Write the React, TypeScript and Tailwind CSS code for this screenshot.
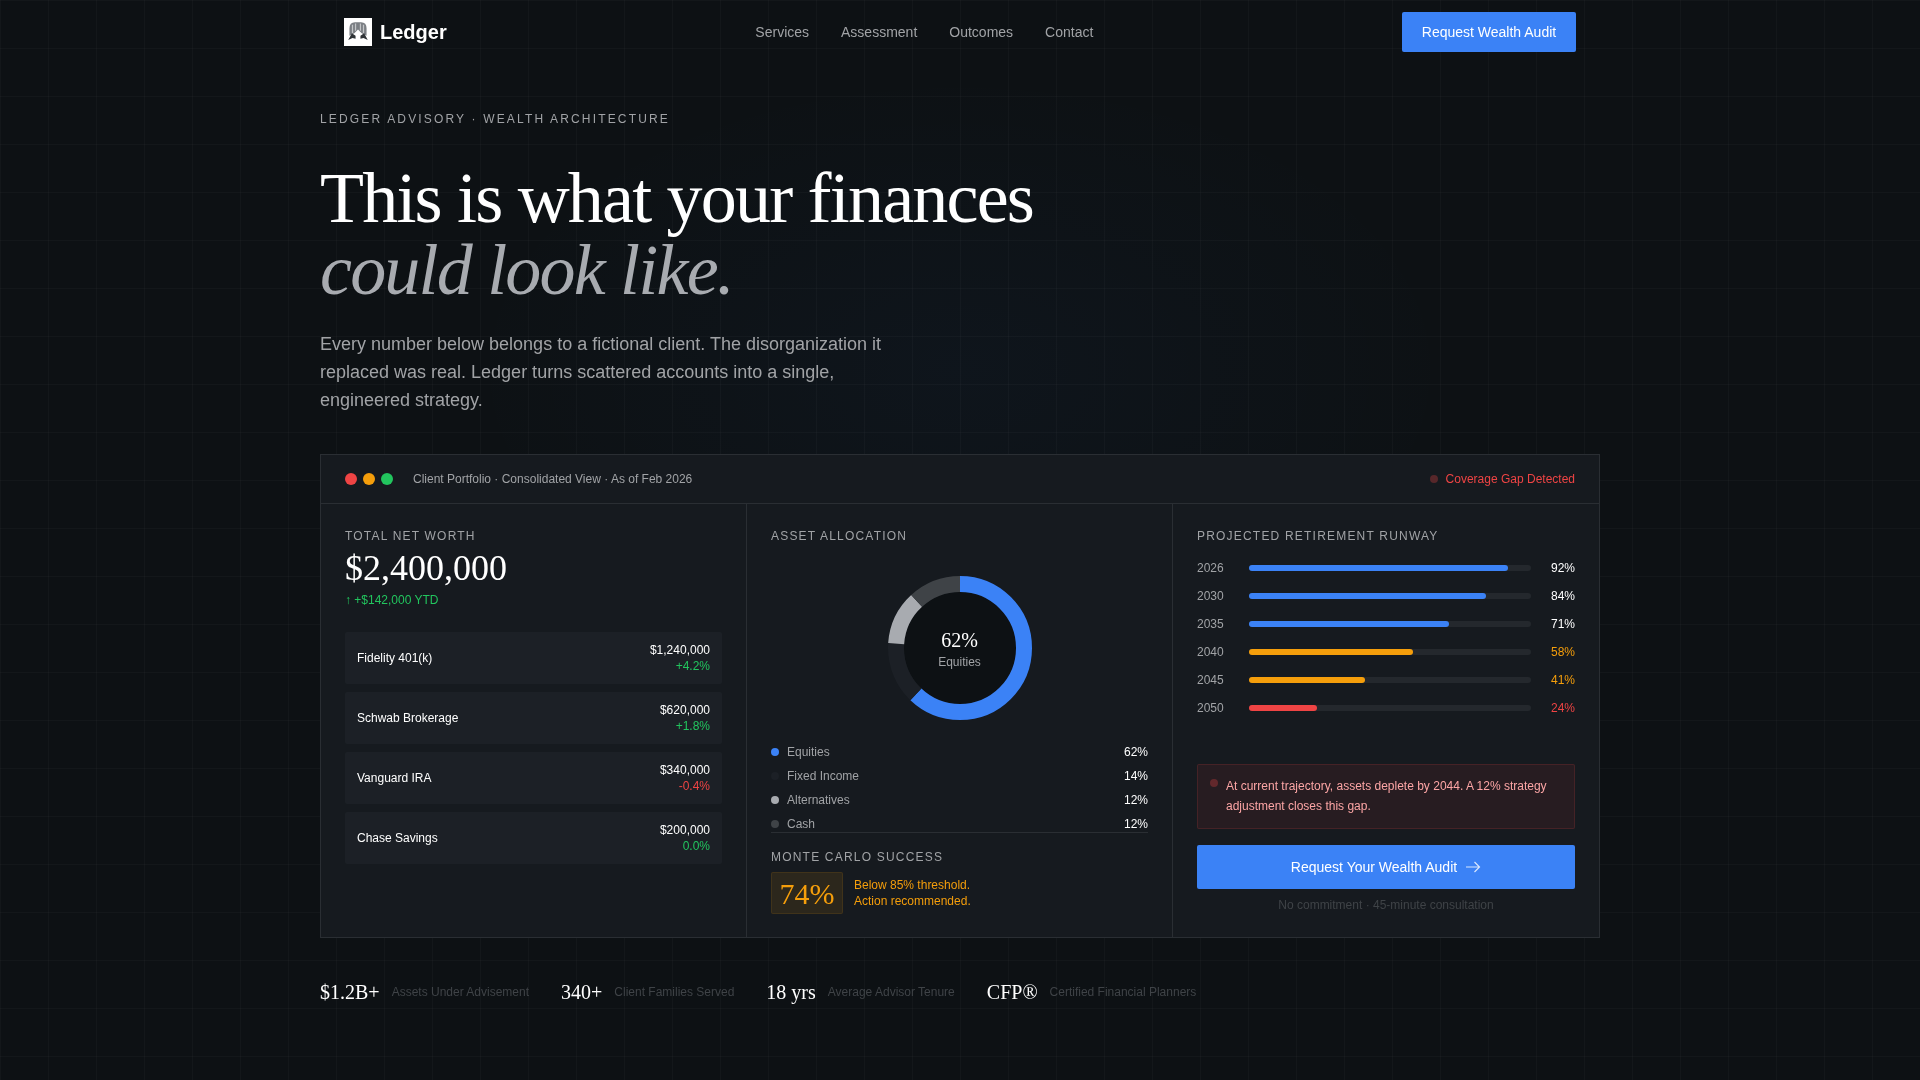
const accounts = [
  { name: 'Fidelity 401(k)', value: '$1,240,000', change: '+4.2%', tone: 'text-[#22c55e]' },
  { name: 'Schwab Brokerage', value: '$620,000', change: '+1.8%', tone: 'text-[#22c55e]' },
  { name: 'Vanguard IRA', value: '$340,000', change: '-0.4%', tone: 'text-[#ef4444]' },
  { name: 'Chase Savings', value: '$200,000', change: '0.0%', tone: 'text-[#22c55e]' },
]

const allocation = [
  { name: 'Equities', pct: 62, dot: 'bg-[#3b82f6]', stroke: '#3b82f6' },
  { name: 'Fixed Income', pct: 14, dot: 'bg-[#1c2026]', stroke: '#1c2026' },
  { name: 'Alternatives', pct: 12, dot: 'bg-[#a8abb0]', stroke: '#a8abb0' },
  { name: 'Cash', pct: 12, dot: 'bg-[#3f4347]', stroke: '#3f4347' },
]

const runway = [
  { year: '2026', pct: 92, bar: 'bg-[#3b82f6]', text: 'text-white' },
  { year: '2030', pct: 84, bar: 'bg-[#3b82f6]', text: 'text-white' },
  { year: '2035', pct: 71, bar: 'bg-[#3b82f6]', text: 'text-white' },
  { year: '2040', pct: 58, bar: 'bg-[#f59e0b]', text: 'text-[#f59e0b]' },
  { year: '2045', pct: 41, bar: 'bg-[#f59e0b]', text: 'text-[#f59e0b]' },
  { year: '2050', pct: 24, bar: 'bg-[#ef4444]', text: 'text-[#ef4444]' },
]

const stats = [
  { value: '$1.2B+', label: 'Assets Under Advisement' },
  { value: '340+', label: 'Client Families Served' },
  { value: '18 yrs', label: 'Average Advisor Tenure' },
  { value: 'CFP®', label: 'Certified Financial Planners' },
]

const serif = "font-['Liberation_Serif',serif]"

function Logo() {
  return (
    <div className="flex size-7 items-center justify-center bg-white">
      <svg width="22" height="22" viewBox="2 3 18 18">
        <path d="M4 15 L4 9 Q4 4 8.5 4 L13.5 4 Q18 4 18 9 L18 15 L14 13 L11 10 L8 13 Z" fill="#7b7f84" />
        <path d="M6.5 6 L6.5 13 M9 5 L9 11 M13 5 L13 11 M15.5 6 L15.5 13" stroke="#c4c6c9" strokeWidth="1" />
        <path d="M3 18.5 L6 13 L9 15 L9 17.5 L6.5 17 Z M19 18.5 L16 13 L13 15 L13 17.5 L15.5 17 Z" fill="#2f3337" />
      </svg>
    </div>
  )
}

function Donut() {
  const r = 64
  const c = 2 * Math.PI * r
  let offset = 0

  return (
    <div className="relative size-[144px]">
      <svg width="144" height="144" viewBox="0 0 144 144" className="-rotate-90">
        <circle cx="72" cy="72" r="56" fill="#0d1114" />
        {allocation.map((item) => {
          const len = (item.pct / 100) * c
          const el = (
            <circle
              key={item.name}
              cx="72"
              cy="72"
              r={r}
              fill="none"
              stroke={item.stroke}
              strokeWidth="16"
              strokeDasharray={`${len} ${c - len}`}
              strokeDashoffset={-offset}
            />
          )
          offset += len
          return el
        })}
      </svg>
      <div className="absolute inset-0 flex flex-col items-center justify-center">
        <span className={`${serif} text-[20px] leading-[28px] text-white`}>62%</span>
        <span className="text-[12px] leading-[16px] text-[#a1a3a6]">Equities</span>
      </div>
    </div>
  )
}

function SectionLabel({ children }: { children: string }) {
  return <div className="text-[12px] leading-[16px] tracking-[0.1em] text-[#a1a3a6]">{children}</div>
}

export default function App() {
  return (
    <div className="min-h-screen overflow-hidden bg-[#0d1114] bg-[radial-gradient(ellipse_500px_300px_at_960px_370px,rgba(59,130,246,0.035),transparent),linear-gradient(rgba(255,255,255,0.025)_1px,transparent_1px),linear-gradient(90deg,rgba(255,255,255,0.025)_1px,transparent_1px)] bg-[size:100%_100%,48px_48px,48px_48px] font-['Liberation_Sans',sans-serif] text-white">
      <div className="mx-auto w-[1280px] will-change-transform">
        <nav className="flex h-[64px] items-center justify-between px-6">
          <div className="flex items-center gap-2">
            <Logo />
            <span className="text-[20px] font-bold leading-[28px]">Ledger</span>
          </div>
          <div className="flex items-center gap-8 text-[14px] text-[#a1a3a6]">
            <span>Services</span>
            <span>Assessment</span>
            <span>Outcomes</span>
            <span>Contact</span>
          </div>
          <button
            type="button"
            className="h-10 w-[174px] rounded-[2px] bg-[#3b82f6] text-[14px] font-medium text-white"
          >
            Request Wealth Audit
          </button>
        </nav>

        <section className="pt-[47px]">
          <div className="text-[12px] leading-[16px] tracking-[0.18em] text-[#a1a3a6]">
            LEDGER ADVISORY · WEALTH ARCHITECTURE
          </div>
          <h1 className={`${serif} mt-[35px] text-[72px] font-normal leading-[72px] tracking-[-0.025em] text-white`}>
            This is what your finances
            <br />
            <em className="text-[#a8abb0]">could look like.</em>
          </h1>
          <p className="mt-6 w-[576px] text-[18px] leading-[28.16px] text-[#a1a3a6]">
            Every number below belongs to a fictional client. The disorganization it replaced was real. Ledger turns
            scattered accounts into a single, engineered strategy.
          </p>
        </section>

        <section className="mt-[40px] border border-[#2a2e33] bg-[#161a1f]">
          <header className="flex h-[49px] items-center justify-between border-b border-[#2a2e33] px-6">
            <div className="flex items-center">
              <div className="flex gap-1.5">
                <span className="size-3 rounded-full bg-[#ef4444]" />
                <span className="size-3 rounded-full bg-[#f59e0b]" />
                <span className="size-3 rounded-full bg-[#22c55e]" />
              </div>
              <span className="ml-5 text-[12px] text-[#a1a3a6]">
                Client Portfolio · Consolidated View · As of Feb 2026
              </span>
            </div>
            <div className="flex items-center gap-2 text-[12px] text-[#ef4444]">
              <span className="size-2 rounded-full bg-[#ef4444]/30" />
              Coverage Gap Detected
            </div>
          </header>

          <div className="grid h-[433px] grid-cols-3">
            <div className="border-r border-[#2a2e33] p-6">
              <SectionLabel>TOTAL NET WORTH</SectionLabel>
              <div className={`${serif} mt-1 text-[36px] leading-[40px] text-white`}>$2,400,000</div>
              <div className="mt-1 text-[12px] leading-[16px] text-[#22c55e]">↑ +$142,000 YTD</div>
              <div className="mt-6 flex flex-col gap-2">
                {accounts.map((account) => (
                  <div
                    key={account.name}
                    className="flex h-[52px] items-center justify-between rounded-[2px] bg-[#1c2026] px-3"
                  >
                    <span className="text-[12px] text-white">{account.name}</span>
                    <div className="text-right text-[12px] leading-[16px]">
                      <div className="text-white">{account.value}</div>
                      <div className={account.tone}>{account.change}</div>
                    </div>
                  </div>
                ))}
              </div>
            </div>

            <div className="border-r border-[#2a2e33] p-6">
              <SectionLabel>ASSET ALLOCATION</SectionLabel>
              <div className="mt-[32px] flex justify-center">
                <Donut />
              </div>
              <div className="mt-5 h-[93px] overflow-hidden border-b border-[#2a2e33]">
                {allocation.map((item) => (
                  <div key={item.name} className="flex h-[24px] items-center justify-between text-[12px]">
                    <div className="flex items-center gap-2 text-[#a1a3a6]">
                      <span className={`size-2 rounded-full ${item.dot}`} />
                      {item.name}
                    </div>
                    <span className="text-white">{item.pct}%</span>
                  </div>
                ))}
              </div>
              <div className="mt-4">
                <SectionLabel>MONTE CARLO SUCCESS</SectionLabel>
              </div>
              <div className="mt-[7px] flex items-center gap-[11px]">
                <div className={`${serif} flex h-[42px] w-[72px] items-center justify-center rounded-[2px] border border-[#f59e0b]/10 bg-[#f59e0b]/10 text-[30px] text-[#f59e0b]`}>
                  74%
                </div>
                <div className="text-[12px] leading-[16px] text-[#f59e0b]">
                  Below 85% threshold.
                  <br />
                  Action recommended.
                </div>
              </div>
            </div>

            <div className="flex flex-col p-6">
              <SectionLabel>PROJECTED RETIREMENT RUNWAY</SectionLabel>
              <div className="mt-4 flex flex-col gap-3">
                {runway.map((row) => (
                  <div key={row.year} className="flex h-4 items-center text-[12px] leading-[16px]">
                    <span className="w-[52px] text-[#a1a3a6]">{row.year}</span>
                    <div className="h-1.5 flex-1 rounded-full bg-[#24282d]">
                      <div className={`h-1.5 rounded-full ${row.bar}`} style={{ width: `${row.pct}%` }} />
                    </div>
                    <span className={`w-[44px] text-right ${row.text}`}>{row.pct}%</span>
                  </div>
                ))}
              </div>
              <div className="mt-[48px] flex h-[65px] gap-2 rounded-[2px] border border-[#ef4444]/15 bg-[#ef4444]/[0.08] px-3 py-[11px] text-[12px] leading-[20px] text-[#fca5a5]">
                <span className="mt-[3px] size-2 shrink-0 rounded-full bg-[#ef4444]/30" />
                <p>At current trajectory, assets deplete by 2044. A 12% strategy adjustment closes this gap.</p>
              </div>
              <button
                type="button"
                className="mt-4 flex h-[44px] items-center justify-center gap-2 rounded-[2px] bg-[#3b82f6] text-[14px] font-medium text-white"
              >
                Request Your Wealth Audit
                <svg width="16" height="16" viewBox="0 0 16 16" fill="none" stroke="currentColor" strokeWidth="1.2" className="opacity-80">
                  <path d="M1 8h13.5M9.5 3l5 5-5 5" />
                </svg>
              </button>
              <div className="mt-2 text-center text-[12px] leading-[16px] text-[#3f4347]">
                No commitment · 45-minute consultation
              </div>
            </div>
          </div>
        </section>

        <section className="mt-[40px] flex items-center gap-8">
          {stats.map((stat) => (
            <div key={stat.label} className="flex items-center gap-3">
              <span className={`${serif} text-[20px] leading-[28px] text-white`}>{stat.value}</span>
              <span className="text-[12px] text-[#3f4347]">{stat.label}</span>
            </div>
          ))}
        </section>
      </div>
    </div>
  )
}
